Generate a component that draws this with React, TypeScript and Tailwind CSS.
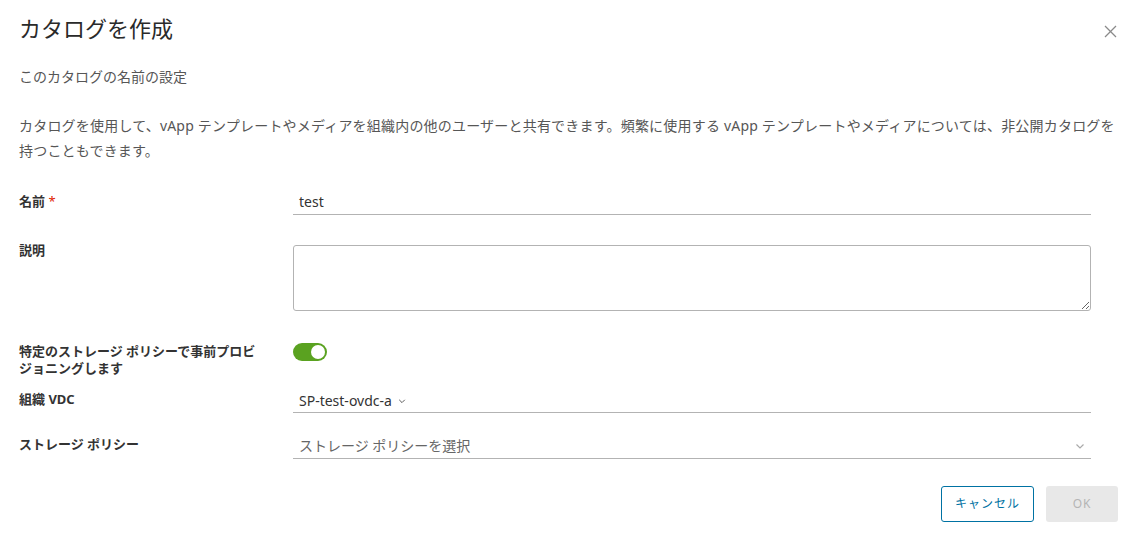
import React from "react";

const Chevron = ({ color = "#565656", size = 8 }: { color?: string; size?: number }) => (
  <svg width={size} height={size} viewBox="0 0 10 10" fill="none">
    <polyline points="1.5,3.5 5,7 8.5,3.5" stroke={color} strokeWidth="1.2" />
  </svg>
);

export default function App() {
  return (
    <div
      className="w-[1133px] h-[538px] bg-white overflow-hidden"
      style={{ fontFamily: '"Noto Sans", "Noto Sans CJK JP", sans-serif' }}
    >
      <div className="pl-[19px] pr-[14px] pt-[14px]">
        {/* header */}
        <div className="flex items-start justify-between">
          <h1 className="text-[22px] leading-[28px] text-[#2a2a2a] font-normal">カタログを作成</h1>
          <button className="mt-[10px] mr-[2px] w-[14px] h-[14px] flex items-center justify-center">
            <svg width="13" height="13" viewBox="0 0 13 13">
              <line x1="1" y1="1" x2="12" y2="12" stroke="#8a8a8a" strokeWidth="1.2" />
              <line x1="12" y1="1" x2="1" y2="12" stroke="#8a8a8a" strokeWidth="1.2" />
            </svg>
          </button>
        </div>

        <p className="mt-[25px] text-[14px] leading-[20px] text-[#565656]">このカタログの名前の設定</p>

        <p className="mt-[26px] text-[14px] leading-[25px] tracking-[0.2px] text-[#565656] whitespace-nowrap">
          カタログを使用して、vApp テンプレートやメディアを組織内の他のユーザーと共有できます。頻繁に使用する vApp テンプレートやメディアについては、非公開カタログを
          <br />
          持つこともできます。
        </p>

        {/* form */}
        <div className="w-[1072px]">
          <div className="mt-[25px] flex">
            <div className="w-[274px] pt-[3px] text-[13px] leading-[20px] font-bold text-[#333]">
              名前 <span className="text-[#e02200] font-normal">*</span>
            </div>
            <div className="w-[798px] h-[27px] border-b border-[#b3b3b3] flex items-center pl-[6px] text-[14px] text-[#333]">
              test
            </div>
          </div>

          <div className="mt-[25px] flex items-start">
            <div className="w-[274px] text-[13px] leading-[20px] font-bold text-[#333]">説明</div>
            <textarea className="mt-[5px] w-[798px] h-[66px] border border-[#b3b3b3] rounded-[3px] outline-none block" />
          </div>

          <div className="mt-[32px] flex items-start">
            <div className="w-[274px] text-[13px] leading-[17px] font-bold text-[#333] whitespace-nowrap">
              特定のストレージ ポリシーで事前プロビ
              <br />
              ジョニングします
            </div>
            <div className="w-[34px] h-[18px] rounded-full bg-[#5aa220] flex items-center justify-end pr-[2px]">
              <div className="w-[14px] h-[14px] rounded-full bg-white" />
            </div>
          </div>

          <div className="mt-[10px] flex">
            <div className="w-[274px] pt-[2px] text-[13px] leading-[20px] font-bold text-[#333]">組織 VDC</div>
            <div className="w-[798px] h-[26px] border-b border-[#b3b3b3] flex items-center pt-[2px] pl-[6px] text-[14px] text-[#333] gap-[6px]">
              <span>SP-test-ovdc-a</span>
              <Chevron />
            </div>
          </div>

          <div className="mt-[20px] flex">
            <div className="w-[274px] pt-[1px] text-[13px] leading-[20px] font-bold text-[#333]">ストレージ ポリシー</div>
            <div className="w-[798px] h-[26px] border-b border-[#b3b3b3] flex items-center justify-between pl-[6px] pr-[6px] text-[14px] text-[#666]">
              <span>ストレージ ポリシーを選択</span>
              <Chevron color="#aaa" size={10} />
            </div>
          </div>
        </div>

        {/* footer */}
        <div className="mt-[27px] flex justify-end gap-[12px] pr-[1px]">
          <button className="w-[93px] h-[36px] border border-[#0072a3] rounded-[3px] text-[12px] tracking-[0.08em] text-[#0072a3]">
            キャンセル
          </button>
          <button className="w-[72px] h-[36px] rounded-[3px] bg-[#e8e8e8] text-[12px] tracking-[0.08em] text-[#b5b5b5]">
            OK
          </button>
        </div>
      </div>
    </div>
  );
}
